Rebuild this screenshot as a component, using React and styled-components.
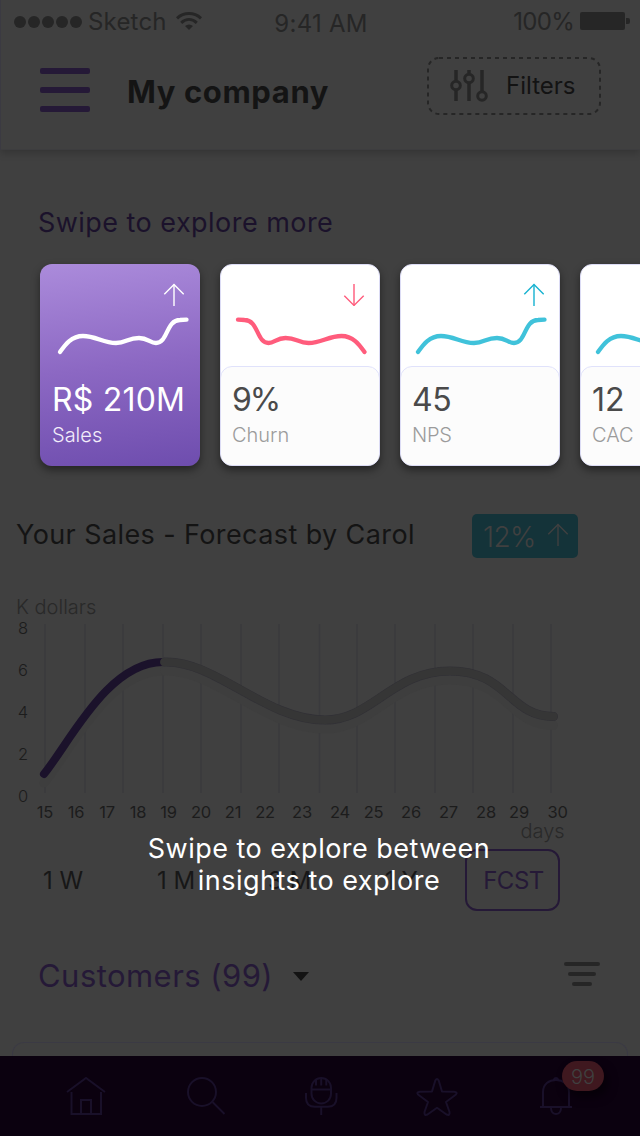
import React from 'react';
import styled, { createGlobalStyle } from 'styled-components';

const Global = createGlobalStyle`
  * { box-sizing: border-box; }
  html, body { margin: 0; padding: 0; background: #404040; }
  body { font-family: Inter, "Liberation Sans", sans-serif; }
  svg { display: block; flex: none; }
`;

const Screen = styled.main`
  position: relative;
  width: 640px;
  height: 1136px;
  overflow: hidden;
  display: flex;
  flex-direction: column;
  background: #404040;
`;

const Text = styled.span`
  font-size: ${(p) => p.$size}px;
  font-weight: ${(p) => p.$weight || 400};
  letter-spacing: ${(p) => p.$track || 0}px;
  color: ${(p) => p.$color};
  line-height: ${(p) => p.$line || 32}px;
  white-space: pre;
`;

const TopBar = styled.header`
  height: 150px;
  flex: none;
  border-left: 1px solid #3b3a42;
  border-bottom: 1px solid #3d3d3f;
  box-shadow: 0 3px 8px rgba(0, 0, 0, 0.2);
`;

const StatusBar = styled.div`
  height: 44px;
  display: grid;
  grid-template-columns: 1fr auto 1fr;
  align-items: start;
  padding: 6px 10px 0 13px;
`;

const Carrier = styled.div`
  display: flex;
  align-items: center;
`;

const Dots = styled.div`
  display: flex;
  gap: 2px;
  margin-right: 6px;
  i { width: 12px; height: 12px; border-radius: 50%; background: #262626; }
`;

const WifiIcon = styled.svg`
  margin-left: 9px;
`;

const Clock = styled.div`
  padding: 2px 2px 0 0;
`;

const Power = styled.div`
  display: flex;
  justify-content: flex-end;
  align-items: center;
  gap: 6px;
`;

const TitleRow = styled.div`
  display: flex;
  align-items: flex-start;
  padding: 13px 39px 0 39px;
`;

const MenuIcon = styled.div`
  width: 50px;
  height: 44px;
  margin: 11px 37px 0 0;
  display: flex;
  flex-direction: column;
  justify-content: space-between;
  i { height: 6px; border-radius: 2px; background: #251937; }
`;

const Title = styled.div`
  flex: 1;
  padding-top: 19px;
`;

const FilterButton = styled.div`
  position: relative;
  width: 174px;
  height: 58px;
  display: flex;
  align-items: center;
  padding-left: 23px;
  gap: 18px;
`;

const DashedFrame = styled.svg`
  position: absolute;
  inset: 0;
`;

const SectionTitle = styled.h2`
  margin: 57px 0 0 38px;
  height: 32px;
  font-weight: 400;
  display: flex;
`;

const CardStrip = styled.section`
  display: flex;
  gap: 20px;
  margin: 25px 0 0 40px;
  flex: none;
`;

const Card = styled.article`
  flex: none;
  width: 160px;
  height: 202px;
  border-radius: 12px;
  display: flex;
  flex-direction: column;
  overflow: hidden;
  border: ${(p) => (p.$active ? 'none' : '1px solid #dcdcf5')};
  padding: ${(p) => (p.$active ? '1px' : 0)};
  background: ${(p) => (p.$active ? 'linear-gradient(173deg, #ab8bdb 0%, #8c68c3 50%, #6e4dae 100%)' : '#fff')};
  box-shadow: 0 4px 8px rgba(0, 0, 0, 0.45);
`;

const CardBody = styled.div`
  flex: 1;
  margin: 0 -1px -1px;
  padding: 15px 0 0 11px;
  border: 1px solid ${(p) => (p.$active ? 'transparent' : '#e0e2fb')};
  border-radius: 12px;
  background: ${(p) => (p.$active ? 'transparent' : '#fcfcfc')};
  display: flex;
  flex-direction: column;
`;

const ForecastHead = styled.div`
  display: flex;
  justify-content: space-between;
  align-items: flex-start;
  padding: 0 62px 0 16px;
  margin-top: 48px;
  height: 44px;
`;

const Growth = styled.div`
  width: 106px;
  height: 44px;
  border-radius: 5px;
  background: #143339;
  display: flex;
  align-items: flex-start;
  justify-content: space-between;
  padding: 7px 9px 0 11px;
  svg { margin-top: 2px; }
`;

const ForecastTitle = styled.div`
  padding-top: 5px;
`;

const Tabs = styled.div`
  display: flex;
  height: 62px;
  flex: none;
  align-items: center;
  padding-left: 43px;
  margin-top: 1px;
`;

const Tab = styled.div`
  width: ${(p) => p.$width}px;
  padding-top: 2px;
`;

const ActiveTab = styled.div`
  width: 95px;
  height: 62px;
  border: 2px solid #251937;
  border-radius: 12px;
  display: flex;
  align-items: center;
  justify-content: center;
  padding: 2px 0 0 2px;
`;

const CustomersRow = styled.div`
  display: flex;
  align-items: flex-start;
  height: 40px;
  margin-top: 44px;
  padding: 5px 40px 0 38px;
`;

const Caret = styled.i`
  margin: 12px auto 0 20px;
  border: 8px solid transparent;
  border-top: 9px solid #131313;
  border-bottom: 0;
`;

const SortIcon = styled.div`
  display: flex;
  flex-direction: column;
  align-items: center;
  gap: 6px;
  width: 36px;
  padding-top: 2px;
`;

const SortLine = styled.i`
  height: 4px;
  width: ${(p) => p.$width}px;
  border-radius: 2px;
  background: #262626;
`;

const ListCard = styled.div`
  margin: 47px 12px 0;
  height: 14px;
  border: 1px solid #3b3a44;
  border-bottom: 0;
  border-radius: 12px 12px 0 0;
`;

const NavBar = styled.nav`
  height: 80px;
  flex: none;
  background: #0b010f;
  display: flex;
  align-items: flex-start;
  padding: 20px 64px 0 64px;
  justify-content: space-between;
`;

const NavItem = styled.div`
  position: relative;
  width: 44px;
  svg { fill: none; stroke: #191029; stroke-width: 2; overflow: visible; }
`;

const Badge = styled.div`
  position: absolute;
  left: 30px;
  top: -15px;
  width: 42px;
  height: 30px;
  border-radius: 15px;
  background: #3f181f;
  box-shadow: 4px 6px 10px rgba(0, 0, 0, 0.5);
  display: flex;
  align-items: center;
  justify-content: center;
  padding-top: 2px;
`;

const Hint = styled.p`
  position: absolute;
  left: 0;
  top: 833px;
  width: 638px;
  margin: 0;
  text-align: center;
`;

const WAVE_UP = 'M0 34 C5 27 11 18 23 18 C36 18 43 25 56 25 C66 25 68 20 79 20 C88 20 90 25 96 25 C108 25 106 2 120 2 L126.5 1.7';

function Wave({ color, down }) {
  return (
    <svg width="158" height="52" viewBox="0 0 158 52" fill="none">
      <g transform={down ? 'translate(143.500 6) scale(-1 1)' : 'translate(17 6)'}>
        <path d={WAVE_UP} stroke={color} strokeWidth="4.3" strokeLinecap="round" strokeLinejoin="round" />
      </g>
    </svg>
  );
}

function Arrow({ color, down }) {
  return (
    <svg width="22" height="23" viewBox="0 0 22 23" fill="none" stroke={color}>
      <g transform={down ? 'matrix(1 0 0 -1 0 24)' : undefined}>
        <path d="M11 1.5V23" strokeWidth="1.9" strokeOpacity=".75" />
        <path d="M1.3 11.300L11 1.6L20.7 11.300" strokeWidth="1.4" />
      </g>
    </svg>
  );
}

const CardTop = styled.div`
  height: 101px;
  flex: none;
  padding-top: 18px;
`;

const ArrowSlot = styled.div`
  display: flex;
  justify-content: flex-end;
  padding-right: 14px;
  height: 29px;
`;

const WaveSlot = styled.div`
  margin-left: ${(p) => p.$shift || 0}px;
`;

const CARDS = [
  { value: 'R$ 210M', label: 'Sales', active: true, color: '#fff', track: 0.2, labelTrack: 0 },
  { value: '9%', label: 'Churn', down: true, color: '#ff5c7c', track: -2, labelTrack: 0 },
  { value: '45', label: 'NPS', color: '#40c2da', arrow: '#18b3d1', track: -0.4, labelTrack: -0.2 },
  { value: '12', label: 'CAC', color: '#40c2da', arrow: '#18b3d1', track: 0, labelTrack: 0 },
];

const GRID = [45, 85, 123, 163, 201, 241, 279, 319.5, 357, 395, 435, 473, 513, 551];
const DAYS = [45, 76, 107, 138, 168.5, 201, 233, 265, 302, 340, 373.5, 411, 448.5, 486, 519, 557.5];
const PAST = 'M44 774 C70 742 108 662 163 662';
const FUTURE = 'M164.500 662 C215 660 265 720 325 720 C372 720 392 671 450 671 C508 671 508 716 553.500 716.5';

const ChartBox = styled.section`
  margin-top: 32px;
  height: 258px;
  flex: none;
`;

const ChartSvg = styled.svg`
  font-family: Inter, sans-serif;
  .axis { font-size: 16.5px; fill: #1c1c1c; font-weight: 300; }
  .day { font-size: 16.5px; fill: #1c1c1c; font-weight: 400; letter-spacing: -0.2px; }
  .unit { font-size: 20px; fill: #292929; font-weight: 300; }
`;

function Chart() {
  return (
    <ChartBox>
      <ChartSvg width="640" height="258" viewBox="0 590 640 258">
        <text className="unit" x="16" y="614">K dollars</text>
        {[8, 6, 4, 2, 0].map((n, i) => (
          <text key={n} className="axis" x="23" y={634 + i * 42} textAnchor="middle">{n}</text>
        ))}
        {GRID.map((x) => (
          <path key={x} d={`M${x} 624V793`} stroke="#3a3a3d" strokeWidth="1.6" />
        ))}
        <g fill="none" strokeLinecap="round">
          <g transform="translate(0 9)" stroke="#3e3e3e" strokeWidth="9">
            <path d={PAST} />
            <path d={FUTURE} />
          </g>
          <path d={PAST} stroke="#1b122b" strokeWidth="8" />
          <path d={FUTURE} stroke="#313036" strokeWidth="9" />
          <path d={FUTURE} stroke="#363636" strokeWidth="8" />
        </g>
        {DAYS.map((x, i) => (
          <text key={x} className="day" x={x} y="818" textAnchor="middle">{15 + i}</text>
        ))}
        <text className="unit" x="520.5" y="838">days</text>
      </ChartSvg>
    </ChartBox>
  );
}

export default function App() {
  return (
    <Screen>
      <Global />
      <TopBar>
        <StatusBar>
          <Carrier>
            <Dots><i /><i /><i /><i /><i /></Dots>
            <Text $size={24} $color="#262626" $track={0.2}>Sketch</Text>
            <WifiIcon width="26" height="20" viewBox="0 0 26 20" fill="none" stroke="#262626">
              <path d="M1 6.300C8 0 18 0 25 6.300" strokeWidth="3" />
              <path d="M5.2 10.800C10 6.500 16 6.500 20.8 10.800" strokeWidth="3" />
              <path d="M9 14C11.5 12 14.5 12 17 14L13 18Z" fill="#262626" stroke="none" />
            </WifiIcon>
          </Carrier>
          <Clock><Text $size={24} $color="#262626" $track={0.25}>9:41 AM</Text></Clock>
          <Power>
            <Text $size={24} $color="#262626" $track={-0.7}>100%</Text>
            <svg width="50" height="20" viewBox="0 0 50 20" fill="#262626">
              <rect x="0" y="0" width="45" height="18" rx="2" />
              <path d="M46 6h2a2 2 0 0 1 2 2v2a2 2 0 0 1-2 2h-2z" />
            </svg>
          </Power>
        </StatusBar>
        <TitleRow>
          <MenuIcon><i /><i /><i /></MenuIcon>
          <Title><Text $size={31} $weight={700} $color="#141414" $track={0.6}>My company</Text></Title>
          <FilterButton>
            <DashedFrame width="174" height="58" viewBox="0 0 174 58" fill="none">
              <rect x="1" y="1" width="172" height="56" rx="11" stroke="#262626" strokeWidth="2" strokeDasharray="4 4" />
            </DashedFrame>
            <svg width="38" height="32" viewBox="0 0 38 32" fill="none" stroke="#262626" strokeWidth="3.5">
              <path d="M6 0V10.5M6 20V31M19 0V3M19 13V31M32 0V21" />
              <circle cx="6" cy="15.5" r="4.3" strokeWidth="3" />
              <circle cx="19" cy="8.5" r="4.3" strokeWidth="3" />
              <circle cx="32" cy="26" r="4.3" strokeWidth="3" />
            </svg>
            <Text $size={24} $color="#131313">Filters</Text>
          </FilterButton>
        </TitleRow>
      </TopBar>

      <SectionTitle><Text $size={27} $color="#1b122b" $track={0.46}>Swipe to explore more</Text></SectionTitle>

      <CardStrip>
        {CARDS.map((c) => (
          <Card key={c.label} $active={c.active}>
            <CardTop>
              <ArrowSlot><Arrow color={c.arrow || c.color} down={c.down} /></ArrowSlot>
              <WaveSlot $shift={c.active ? 2 : 0}><Wave color={c.color} down={c.down} /></WaveSlot>
            </CardTop>
            <CardBody $active={c.active}>
              <Text $size={32} $line={36} $color={c.active ? '#fff' : '#4a4a4a'} $track={c.track}>{c.value}</Text>
              <Text $size={20} $line={34} $weight={300} $color={c.active ? '#f2ecfa' : '#9b9b9b'} $track={c.labelTrack}>{c.label}</Text>
            </CardBody>
          </Card>
        ))}
      </CardStrip>

      <ForecastHead>
        <ForecastTitle><Text $size={27} $color="#141414" $track={0.4}>Your Sales - Forecast by Carol</Text></ForecastTitle>
        <Growth>
          <Text $size={28} $weight={300} $color="#404040" $track={-0.6}>12%</Text>
          <Arrow color="#404040" />
        </Growth>
      </ForecastHead>

      <Chart />

      <Tabs>
        <Tab $width={114}><Text $size={24} $color="#171717">1 W</Text></Tab>
        <Tab $width={111}><Text $size={24} $color="#171717">1 M</Text></Tab>
        <Tab $width={117}><Text $size={24} $color="#171717">3 M</Text></Tab>
        <Tab $width={80}><Text $size={24} $color="#171717">1 Y</Text></Tab>
        <ActiveTab><Text $size={24} $color="#251937" $track={-0.5}>FCST</Text></ActiveTab>
      </Tabs>

      <CustomersRow>
        <Text $size={31} $color="#251937" $track={0.45}>Customers (99)</Text>
        <Caret />
        <SortIcon>
          <SortLine $width={36} />
          <SortLine $width={28} />
          <SortLine $width={20} />
        </SortIcon>
      </CustomersRow>

      <ListCard />

      <NavBar>
        <NavItem>
          <svg width="44" height="40" viewBox="0 0 44 40">
            <path d="M3 16L22 2L41 16M7.500 16V38H37V16M17 38V24H27V38" />
          </svg>
        </NavItem>
        <NavItem>
          <svg width="44" height="40" viewBox="0 0 44 40">
            <circle cx="21" cy="16" r="14" />
            <path d="M31.500 26L43.500 38" />
          </svg>
        </NavItem>
        <NavItem>
          <svg width="44" height="40" viewBox="0 0 44 40">
            <rect x="13.500" y="2" width="19.500" height="25.500" rx="9.700" />
            <path d="M13.500 13.500H33M18 4V9.500M23.200 2V9.500M28.300 4V9.500M8 17V22C8 28 11.500 30.800 17 30.800H29.500C35 30.800 38.500 28 38.500 22V17M23.200 31V39" />
          </svg>
        </NavItem>
        <NavItem>
          <svg width="44" height="40" viewBox="0 0 44 40">
            <path strokeLinejoin="round" d="M20.300 4.500Q22 1.500 23.700 4.500L27 15.500L39 15.700Q43 16 41 18.500L31 26L34.500 36Q35 40 31.500 38.500L22 31.700L12.500 38.500Q9 40 9.500 36L13 26L3 18.500Q1 16 5 15.700L17 15.500Z" />
          </svg>
        </NavItem>
        <NavItem>
          <svg width="44" height="40" viewBox="0 0 44 40">
            <path d="M11 31V16C11 8 17 4 24 4S37 8 37 16V31M8 31H40M19 32C19 40 29 40 29 32M21.500 4Q24 0 26.500 4" />
          </svg>
          <Badge><Text $size={20} $weight={300} $color="#404040">99</Text></Badge>
        </NavItem>
      </NavBar>

      <Hint><Text $size={27} $color="#fff" $track={0.48}>{'Swipe to explore between\ninsights to explore'}</Text></Hint>
    </Screen>
  );
}
